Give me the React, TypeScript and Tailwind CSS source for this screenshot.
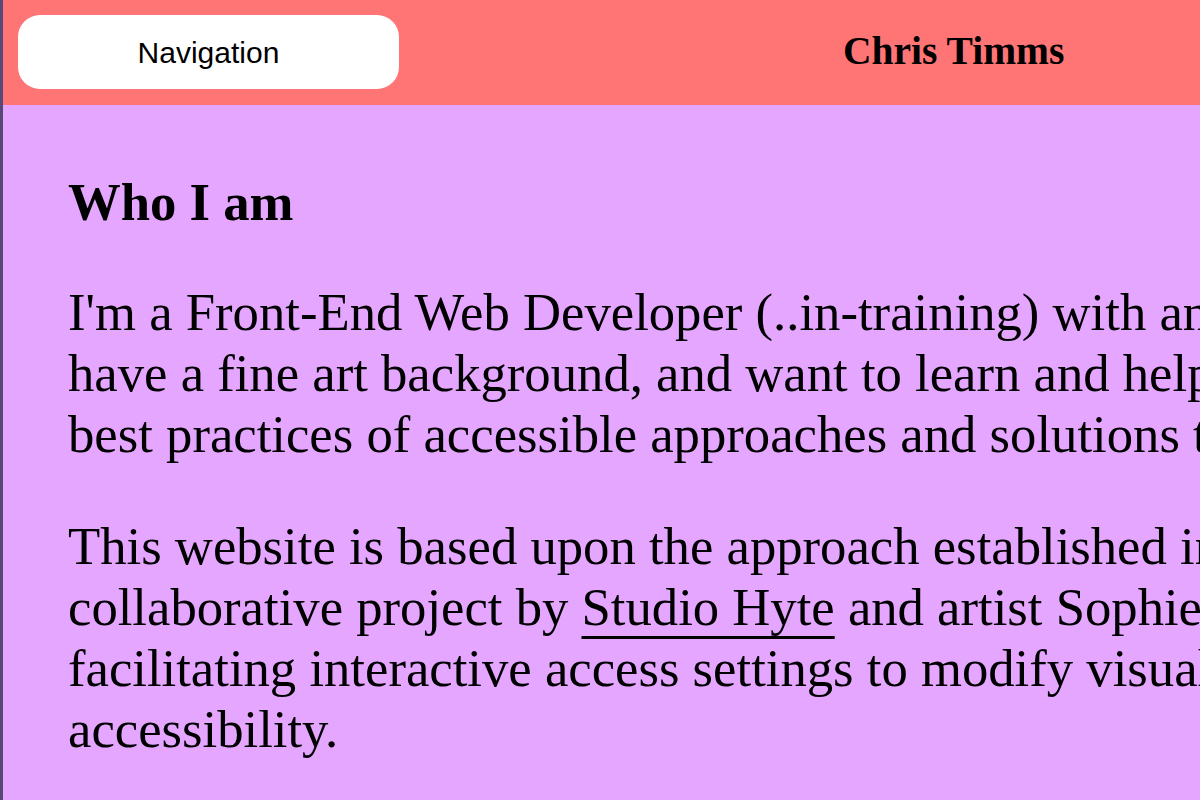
export default function App() {
  return (
    <div className="flex h-[800px] w-[1200px] overflow-hidden bg-[#e5a6ff] font-['Liberation_Serif',serif] text-black">
      {/* thin dark edge on the left */}
      <div className="w-[3px] shrink-0 bg-[#584878]" />

      <div className="flex min-w-0 flex-1 flex-col">
        <header className="flex h-[105px] shrink-0 items-start bg-[#ff7575]">
          <button className="ml-[15px] mt-[15px] flex h-[74px] w-[381px] items-center justify-center rounded-[22px] bg-white font-['Liberation_Sans',Arial,sans-serif] text-[30px] text-black">
            Navigation
          </button>
          <h1 className="ml-[444px] mt-[32px] whitespace-nowrap text-[39.5px] font-bold leading-none">
            Chris Timms
          </h1>
        </header>

        <main className="flex-1 pl-[65px] pt-[67px] text-[52.7px] leading-[61px]">
          <h2 className="whitespace-nowrap font-bold">Who I am</h2>

          <p className="mt-[49px] whitespace-nowrap">
            I'm a Front-End Web Developer (..in-training) with an interest in accessibility. I
            <br />
            have a fine art background, and want to learn and help promote the
            <br />
            best practices of accessible approaches and solutions to web design.
          </p>

          <p className="mt-[51px] whitespace-nowrap">
            This website is based upon the approach established in the
            <br />
            collaborative project by{" "}
            <a href="#" className="underline decoration-3 underline-offset-[11px]">
              Studio Hyte
            </a>{" "}
            and artist Sophie Hoyle,
            <br />
            facilitating interactive access settings to modify visual
            <br />
            accessibility.
          </p>
        </main>
      </div>
    </div>
  );
}
